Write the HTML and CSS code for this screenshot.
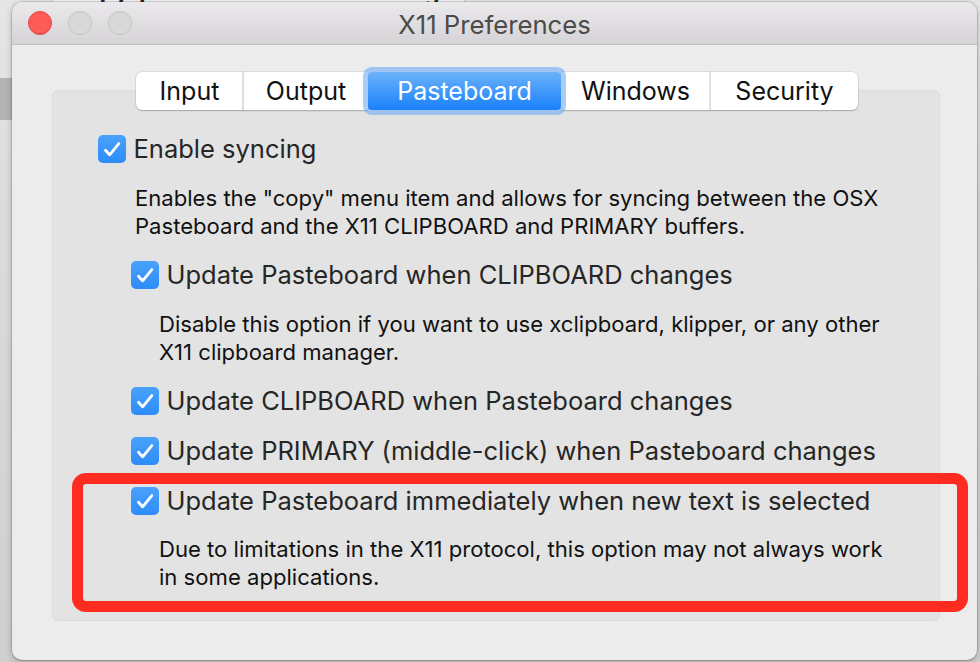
FILE: index.html
```html
<!DOCTYPE html>
<html>
<head>
<meta charset="utf-8">
<link rel="stylesheet" href="styles.css">
</head>
<body>
<div class="backdrop">
  <div class="bg-window">
    <span class="bg-heading">Copy-paste with X11 forwarding on macOS</span>
  </div>
  <div class="bg-band"></div>
</div>

<div class="window">
  <div class="titlebar">
    <div class="lights">
      <span class="light close"></span>
      <span class="light"></span>
      <span class="light"></span>
    </div>
    <div class="title">X11 Preferences</div>
    <div></div>
  </div>

  <div class="content">
    <div class="tabs">
      <div class="seg seg-input">Input</div>
      <div class="seg seg-output">Output</div>
      <div class="seg seg-paste selected">Pasteboard</div>
      <div class="seg seg-windows">Windows</div>
      <div class="seg seg-security">Security</div>
    </div>

    <div class="group">
      <div class="opt">
        <span class="cb"><svg viewBox="0 0 28 28" width="28" height="28"><path d="M7.5 15.2 L11.6 19.8 L20.8 8.6" fill="none" stroke="#fff" stroke-width="2.8" stroke-linecap="round" stroke-linejoin="round"/></svg></span>
        <span class="lbl">Enable syncing</span>
      </div>
      <p class="desc desc-top">Enables the "copy" menu item and allows for syncing between the OSX<br>Pasteboard and the X11 CLIPBOARD and PRIMARY buffers.</p>

      <div class="sub">
        <div class="opt">
          <span class="cb"><svg viewBox="0 0 28 28" width="28" height="28"><path d="M7.5 15.2 L11.6 19.8 L20.8 8.6" fill="none" stroke="#fff" stroke-width="2.8" stroke-linecap="round" stroke-linejoin="round"/></svg></span>
          <span class="lbl">Update Pasteboard when CLIPBOARD changes</span>
        </div>
        <p class="desc desc-sub">Disable this option if you want to use xclipboard, klipper, or any other<br>X11 clipboard manager.</p>

        <div class="opt">
          <span class="cb"><svg viewBox="0 0 28 28" width="28" height="28"><path d="M7.5 15.2 L11.6 19.8 L20.8 8.6" fill="none" stroke="#fff" stroke-width="2.8" stroke-linecap="round" stroke-linejoin="round"/></svg></span>
          <span class="lbl">Update CLIPBOARD when Pasteboard changes</span>
        </div>

        <div class="opt">
          <span class="cb"><svg viewBox="0 0 28 28" width="28" height="28"><path d="M7.5 15.2 L11.6 19.8 L20.8 8.6" fill="none" stroke="#fff" stroke-width="2.8" stroke-linecap="round" stroke-linejoin="round"/></svg></span>
          <span class="lbl">Update PRIMARY (middle-click) when Pasteboard changes</span>
        </div>

        <div class="opt">
          <span class="cb"><svg viewBox="0 0 28 28" width="28" height="28"><path d="M7.5 15.2 L11.6 19.8 L20.8 8.6" fill="none" stroke="#fff" stroke-width="2.8" stroke-linecap="round" stroke-linejoin="round"/></svg></span>
          <span class="lbl">Update Pasteboard immediately when new text is selected</span>
        </div>
        <p class="desc desc-sub desc-last">Due to limitations in the X11 protocol, this option may not always work<br>in some applications.</p>
      </div>
    </div>
  </div>

  <div class="annotation"></div>
</div>
</body>
</html>
```

FILE: styles.css
```css
html, body {
  margin: 0;
  padding: 0;
}

body {
  width: 980px;
  height: 662px;
  overflow: hidden;
  position: relative;
  background: linear-gradient(#e6e6e6 0, #dcdcdc 200px, #cfcfcf 662px);
  font-family: Inter, "Noto Sans", sans-serif;
}

.backdrop {
  position: absolute;
  inset: 0;
}

.bg-window {
  position: absolute;
  left: 52px;
  top: -40px;
  width: 411px;
  height: 60px;
  background: #f4f4f4;
  border-left: 1px solid #d0d0d0;
  border-right: 1px solid #d0d0d0;
  overflow: hidden;
}

.bg-heading {
  position: absolute;
  left: 14px;
  bottom: 14px;
  font-size: 24px;
  font-weight: 700;
  color: #2a2a2a;
  white-space: nowrap;
}

.bg-band {
  position: absolute;
  left: 0;
  top: 78px;
  width: 14px;
  height: 42px;
  background: #b4b4b4;
}

.window {
  position: absolute;
  left: 12px;
  top: 2px;
  width: 965px;
  height: 658px;
  background: #ececec;
  border-radius: 10px;
  box-shadow: 0 0 0 0.5px rgba(0,0,0,0.25), 0 2px 6px rgba(0,0,0,0.25);
  display: flex;
  flex-direction: column;
  z-index: 1;
}

.titlebar {
  height: 42px;
  flex: none;
  display: grid;
  grid-template-columns: 1fr auto 1fr;
  align-items: center;
  background: linear-gradient(#ebe9eb, #d5d3d5);
  border-bottom: 1px solid #c2c0c2;
  border-radius: 10px 10px 0 0;
}

.lights {
  display: flex;
  gap: 16px;
  padding-left: 16px;
}

.light {
  width: 22px;
  height: 22px;
  border-radius: 50%;
  background: #d9d8d9;
  border: 1px solid #c5c4c5;
}

.light.close {
  background: #fc5b57;
  border-color: #e0443e;
}

.title {
  font-size: 25.7px;
  color: #4b4b4b;
  padding-top: 2px;
}

.content {
  flex: 1;
  display: flex;
  flex-direction: column;
  padding: 27px 37px 39px 40px;
}

.tabs {
  display: flex;
  justify-content: center;
  position: relative;
  z-index: 2;
  margin-bottom: -20px;
  padding-left: 2px;
}

.seg {
  height: 38px;
  box-sizing: border-box;
  display: flex;
  align-items: center;
  justify-content: center;
  font-size: 25px;
  color: #111;
  background: #fff;
  border-left: 1px solid #dadada;
  box-shadow: 0 1px 1.5px rgba(0,0,0,0.22), 0 0 0 0.5px rgba(0,0,0,0.12);
}

.seg-input { width: 107px; border-left: none; border-radius: 6px 0 0 6px; }
.seg-output { width: 125px; }
.seg-paste { width: 193px; }
.seg-windows { width: 149px; border-left: none; }
.seg-security { width: 148px; border-radius: 0 6px 6px 0; }

.seg.selected {
  position: relative;
  z-index: 3;
  color: #fff;
  border-left: none;
  border-radius: 4px;
  background: linear-gradient(#6cb2fa, #1980fa);
  box-shadow: 0 0 0 5px rgba(110, 172, 245, 0.6);
}

.group {
  flex: 1;
  background: #e3e3e3;
  border: 1px solid #dbdbdb;
  border-radius: 6px;
  padding: 44px 0 0 45px;
}

.opt {
  display: flex;
  align-items: center;
  gap: 7.5px;
  height: 28px;
}

.cb {
  width: 28px;
  height: 28px;
  flex: none;
  border-radius: 5px;
  background: linear-gradient(#4aa2fc, #2d8cf9);
  display: flex;
}

.lbl {
  font-size: 25.5px;
  line-height: 28px;
  color: #262626;
  white-space: nowrap;
}

.desc {
  margin: 22px 0 21px;
  font-size: 22.1px;
  line-height: 27.5px;
  color: #111;
  white-space: nowrap;
}

.desc-top {
  margin-left: 37px;
  margin-bottom: 21px;
}

.sub {
  padding-left: 33px;
  display: flex;
  flex-direction: column;
}

.desc-sub {
  margin-left: 28px;
}

.desc-last {
  margin-top: 21px;
}

.sub .opt + .opt {
  margin-top: 22px;
}

.annotation {
  position: absolute;
  left: 60px;
  top: 471px;
  width: 896px;
  height: 139px;
  box-sizing: border-box;
  border: 11px solid #fe2b20;
  border-radius: 14px;
  z-index: 5;
}
```
